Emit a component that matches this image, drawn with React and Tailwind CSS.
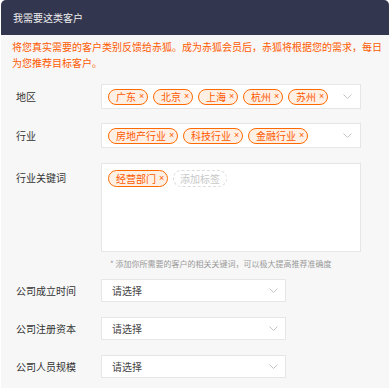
import React from "react";

const font = { fontFamily: '"Noto Sans CJK SC", "Noto Sans", sans-serif' };
const latin = { fontFamily: '"Liberation Sans", Arial, sans-serif' };

function Chevron({ className = "" }) {
  return (
    <svg width="9" height="5" viewBox="0 0 9 5" className={className} fill="none">
      <path d="M0.5 0.5 L4.5 4.5 L8.5 0.5" stroke="#c4c4c4" strokeWidth="1" />
    </svg>
  );
}

function X() {
  return (
    <span className="ml-[3px] w-[5px] text-[9px] leading-none text-[#ff5a00] flex justify-center" style={latin}>
      ×
    </span>
  );
}

function Tag({ children }) {
  return (
    <span className="inline-flex items-center h-4 pl-[7px] pr-[3px] rounded-full border border-[#ff6a00] bg-[#fff0e6] text-[#ff5a00] text-[10px] leading-none">
      <span>{children}</span>
      <X />
    </span>
  );
}

function Label({ children, className = "" }) {
  return <div className={"w-[85px] shrink-0 text-[10px] text-[#333] " + className}>{children}</div>;
}

function Select() {
  return (
    <div className="w-[185px] h-[23px] bg-white border border-[#e6e6e6] flex items-center justify-between pl-[10px] pr-[7px]">
      <span className="text-[10px] text-[#444]">请选择</span>
      <Chevron />
    </div>
  );
}

export default function App() {
  return (
    <div className="w-[390px] h-[388px] bg-white" style={font}>
      <div className="ml-px w-[388px] h-[388px] bg-[#f7f7f7] rounded-t-[5px] overflow-hidden">
        <div className="h-[35px] bg-[#33364f] flex items-center pl-[12px] text-[10px] text-[#eeeeee]">
          我需要这类客户
        </div>
        <div className="pl-[11px] pr-[2px] pt-[4px] text-[10px] leading-[16px] text-[#ff5a00]">
          将您真实需要的客户类别反馈给赤狐。成为赤狐会员后，赤狐将根据您的需求，每日为您推荐目标客户。
        </div>
        <div className="pl-[15px] pt-[13px] flex flex-col">
          <div className="flex items-center">
            <Label>地区</Label>
            <div className="w-[260px] h-[25px] bg-white border border-[#e6e6e6] flex items-center justify-between pl-[6px] pr-[8px]">
              <div className="flex items-center gap-[5px]">
                <Tag>广东</Tag>
                <Tag>北京</Tag>
                <Tag>上海</Tag>
                <Tag>杭州</Tag>
                <Tag>苏州</Tag>
              </div>
              <Chevron />
            </div>
          </div>
          <div className="flex items-center mt-[14px]">
            <Label>行业</Label>
            <div className="w-[260px] h-[25px] bg-white border border-[#e6e6e6] flex items-center justify-between pl-[6px] pr-[8px]">
              <div className="flex items-center gap-[5px]">
                <Tag>房地产行业</Tag>
                <Tag>科技行业</Tag>
                <Tag>金融行业</Tag>
              </div>
              <Chevron />
            </div>
          </div>
          <div className="flex items-start mt-[15px]">
            <Label className="pt-[7px]">行业关键词</Label>
            <div className="flex flex-col">
              <div className="w-[260px] h-[89px] bg-white border border-[#e6e6e6] pl-[6px] pt-[6px]">
                <div className="flex items-center gap-[5px]">
                  <span className="inline-flex items-center h-[17px] pl-[7px] pr-[3px] rounded-full border border-[#ff6a00] bg-[#fff0e6] text-[#ff5a00] text-[10px] leading-none">
                    <span>经营部门</span>
                    <X />
                  </span>
                  <span className="inline-flex items-center h-[17px] px-[6px] rounded-full border border-dashed border-[#dcdcdc] text-[#c8c8c8] text-[10px] leading-none">
                    添加标签
                  </span>
                </div>
              </div>
              <div className="pl-[9px] mt-[6px] text-[8px] leading-[12px] text-[#999]">
                * 添加你所需要的客户的相关关键词，可以极大提高推荐准确度
              </div>
            </div>
          </div>
          <div className="flex items-center mt-[9px]">
            <Label>公司成立时间</Label>
            <Select />
          </div>
          <div className="flex items-center mt-[15px]">
            <Label>公司注册资本</Label>
            <Select />
          </div>
          <div className="flex items-center mt-[15px]">
            <Label>公司人员规模</Label>
            <Select />
          </div>
        </div>
      </div>
    </div>
  );
}
